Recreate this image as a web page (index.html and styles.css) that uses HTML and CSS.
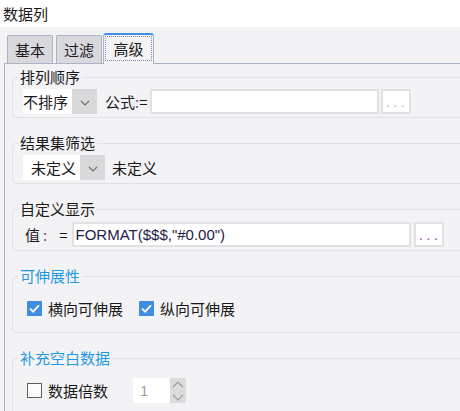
FILE: index.html
```html
<!DOCTYPE html>
<html lang="zh-CN">
<head>
<meta charset="utf-8">
<title>数据列</title>
<link rel="stylesheet" href="styles.css">
</head>
<body>
<div class="title">数据列</div>
<div class="dialog">
  <div class="tabs">
    <div class="tab">基本</div>
    <div class="tab">过滤</div>
    <div class="tab active"><span class="focus">高级</span></div>
  </div>
  <div class="panel">
    <fieldset class="group">
      <legend>排列顺序</legend>
      <div class="row">
        <div class="combo">
          <span class="combo-text c1">不排序</span>
          <span class="combo-arrow"><svg width="10" height="6" viewBox="0 0 10 6"><path d="M1 1 L5 5 L9 1" fill="none" stroke="#707070" stroke-width="1.2"/></svg></span>
        </div>
        <span class="lbl formula">公式<span class="colon">:</span>=</span>
        <div class="input w1"></div>
        <div class="btn disabled">...</div>
      </div>
    </fieldset>

    <fieldset class="group">
      <legend>结果集筛选</legend>
      <div class="row">
        <div class="combo">
          <span class="combo-text c2">未定义</span>
          <span class="combo-arrow"><svg width="10" height="6" viewBox="0 0 10 6"><path d="M1 1 L5 5 L9 1" fill="none" stroke="#707070" stroke-width="1.2"/></svg></span>
        </div>
        <span class="lbl filter">未定义</span>
      </div>
    </fieldset>

    <fieldset class="group g3">
      <legend>自定义显示</legend>
      <div class="row">
        <span class="lbl val">值</span><span class="colon vcolon">:</span><span class="lbl eq">=</span>
        <div class="input w2">FORMAT($$$,"#0.00")</div>
        <div class="btn enabled">...</div>
      </div>
    </fieldset>

    <fieldset class="group tall">
      <legend class="blue">可伸展性</legend>
      <div class="row">
        <span class="check on"><svg width="15" height="15" viewBox="0 0 15 15"><path d="M3 7.6 L6.1 10.6 L12 4.4" fill="none" stroke="#fff" stroke-width="1.8"/></svg></span>
        <span class="lbl cl">横向可伸展</span>
        <span class="check on second"><svg width="15" height="15" viewBox="0 0 15 15"><path d="M3 7.6 L6.1 10.6 L12 4.4" fill="none" stroke="#fff" stroke-width="1.8"/></svg></span>
        <span class="lbl cl">纵向可伸展</span>
      </div>
    </fieldset>

    <fieldset class="group tall">
      <legend class="blue">补充空白数据</legend>
      <div class="row">
        <span class="check off"></span>
        <span class="lbl cl">数据倍数</span>
        <div class="spin">
          <span class="spin-text">1</span>
          <span class="spin-arrows">
            <svg width="12" height="7" viewBox="0 0 12 7"><path d="M1 6 L6 1 L11 6" fill="none" stroke="#9a9a9a" stroke-width="1.1"/></svg>
            <svg width="12" height="7" viewBox="0 0 12 7"><path d="M1 1 L6 6 L11 1" fill="none" stroke="#9a9a9a" stroke-width="1.1"/></svg>
          </span>
        </div>
      </div>
    </fieldset>
  </div>
</div>
</body>
</html>
```

FILE: styles.css
```css
html, body {
  margin: 0;
  padding: 0;
}
body {
  width: 460px;
  height: 411px;
  overflow: hidden;
  background: #ffffff;
  font-family: "Noto Sans CJK SC", "Noto Sans", sans-serif;
  font-size: 15px;
  color: #1a1a1a;
}
.title {
  height: 27px;
  line-height: 27px;
  padding-left: 3px;
}
.dialog {
  background: #f3f3f6;
  padding: 6px 0 0 4px;
  height: 378px;
  overflow: hidden;
}
.tabs {
  display: flex;
  align-items: flex-end;
  height: 31px;
  padding-left: 3px;
  background: linear-gradient(#a9b4c7, #a9b4c7) left bottom / 100% 1px no-repeat;
  background-position: 0 30px;
}
.tab {
  box-sizing: border-box;
  width: 46px;
  height: 28px;
  margin-bottom: 1px;
  margin-right: 3px;
  border: 1px solid #a9b4c7;
  border-bottom: none;
  border-radius: 2px 2px 0 0;
  background: #d9d9dd;
  display: flex;
  align-items: center;
  justify-content: center;
  line-height: 18px;
  padding-top: 1px;
}
.tab:nth-child(2) {
  margin-right: 1px;
}
.tab.active {
  width: 51px;
  height: 31px;
  margin-bottom: 0;
  margin-right: 0;
  background: #f3f3f6;
  border-top: 2px solid #3f8fe6;
  border-radius: 3px 3px 0 0;
  padding: 1px 1px 2px;
  align-items: stretch;
}
.focus {
  flex: 1;
  outline: 1px dotted #7d88a8;
  outline-offset: -1px;
  display: flex;
  align-items: center;
  justify-content: center;
  margin-bottom: 1px;
}
.panel {
  border-left: 1px solid #a9b4c7;
  padding: 4px 0 0 7px;
  height: 400px;
}
.group {
  margin: 0 -40px 16px 0;
  padding: 3px 0 3px 10px;
  border: 1px solid #e2e2e6;
  border-radius: 4px;
  min-width: 0;
}
.group legend {
  padding: 0 2px;
  margin-left: -5px;
  line-height: 18px;
  height: 18px;
}
.group legend.blue {
  color: #1f9ae0;
}
.group.g3 {
  padding-top: 4px;
}
.group.tall {
  padding-top: 11px;
  padding-bottom: 11px;
}
.row {
  display: flex;
  align-items: center;
  height: 25px;
}
.combo {
  display: flex;
  height: 25px;
}
.combo-text {
  background: #ffffff;
  line-height: 25px;
  box-sizing: border-box;
}
.combo-text.c1 {
  width: 49px;
}
.combo-text.c2 {
  width: 57px;
  padding-left: 8px;
}
.combo-arrow {
  width: 25px;
  background: #d9d9dc;
  display: flex;
  align-items: center;
  justify-content: center;
  padding-top: 2px;
  box-sizing: border-box;
}
.lbl {
  line-height: 25px;
  white-space: nowrap;
}
.colon {
  color: #7a4f8c;
}
.formula {
  margin-left: 8px;
}
.filter {
  margin-left: 7px;
}
.val {
  margin-left: 2px;
}
.vcolon {
  margin-left: 3px;
  line-height: 25px;
}
.eq {
  margin-left: 12px;
}
.input {
  box-sizing: border-box;
  height: 25px;
  background: #ffffff;
  border: 2px solid #e2e2e5;
  font-family: "Liberation Sans", Arial, sans-serif;
  font-size: 15px;
  line-height: 21px;
  color: #1e2048;
  padding-left: 2px;
  white-space: nowrap;
}
.input.w1 {
  width: 229px;
  margin-left: 2px;
}
.input.w2 {
  width: 339px;
  margin-left: 4px;
}
.btn {
  box-sizing: border-box;
  width: 30px;
  height: 25px;
  background: #ffffff;
  border: 2px solid #e2e2e5;
  font-family: "Liberation Sans", Arial, sans-serif;
  font-size: 15px;
  line-height: 15px;
  letter-spacing: 3.3px;
  display: flex;
  align-items: flex-end;
  justify-content: center;
  padding: 0 0 3px 3px;
  margin-left: 2px;
}
.btn.disabled {
  color: #c9b8c4;
}
.btn.enabled {
  color: #9a4fb0;
  margin-left: 3px;
}
.check {
  box-sizing: border-box;
  width: 15px;
  height: 15px;
  margin-left: 4px;
  display: flex;
}
.check.on {
  background: #3e8ee6;
  border-radius: 1px;
}
.check.off {
  background: #fbfbfb;
  border: 1px solid #5f5f5f;
}
.check.second {
  margin-left: 16px;
}
.cl {
  margin-left: 6px;
}
.spin {
  display: flex;
  height: 25px;
  margin-left: 25px;
}
.spin-text {
  box-sizing: border-box;
  width: 37px;
  background: #ffffff;
  padding-left: 7px;
  line-height: 25px;
  color: #a0a0a0;
  font-family: "Liberation Sans", Arial, sans-serif;
}
.spin-arrows {
  width: 16px;
  background: #dcdcdf;
  display: flex;
  flex-direction: column;
  align-items: center;
  justify-content: space-between;
  padding: 3px 0 2px;
  box-sizing: border-box;
}
.spin-arrows svg {
  display: block;
}
```
